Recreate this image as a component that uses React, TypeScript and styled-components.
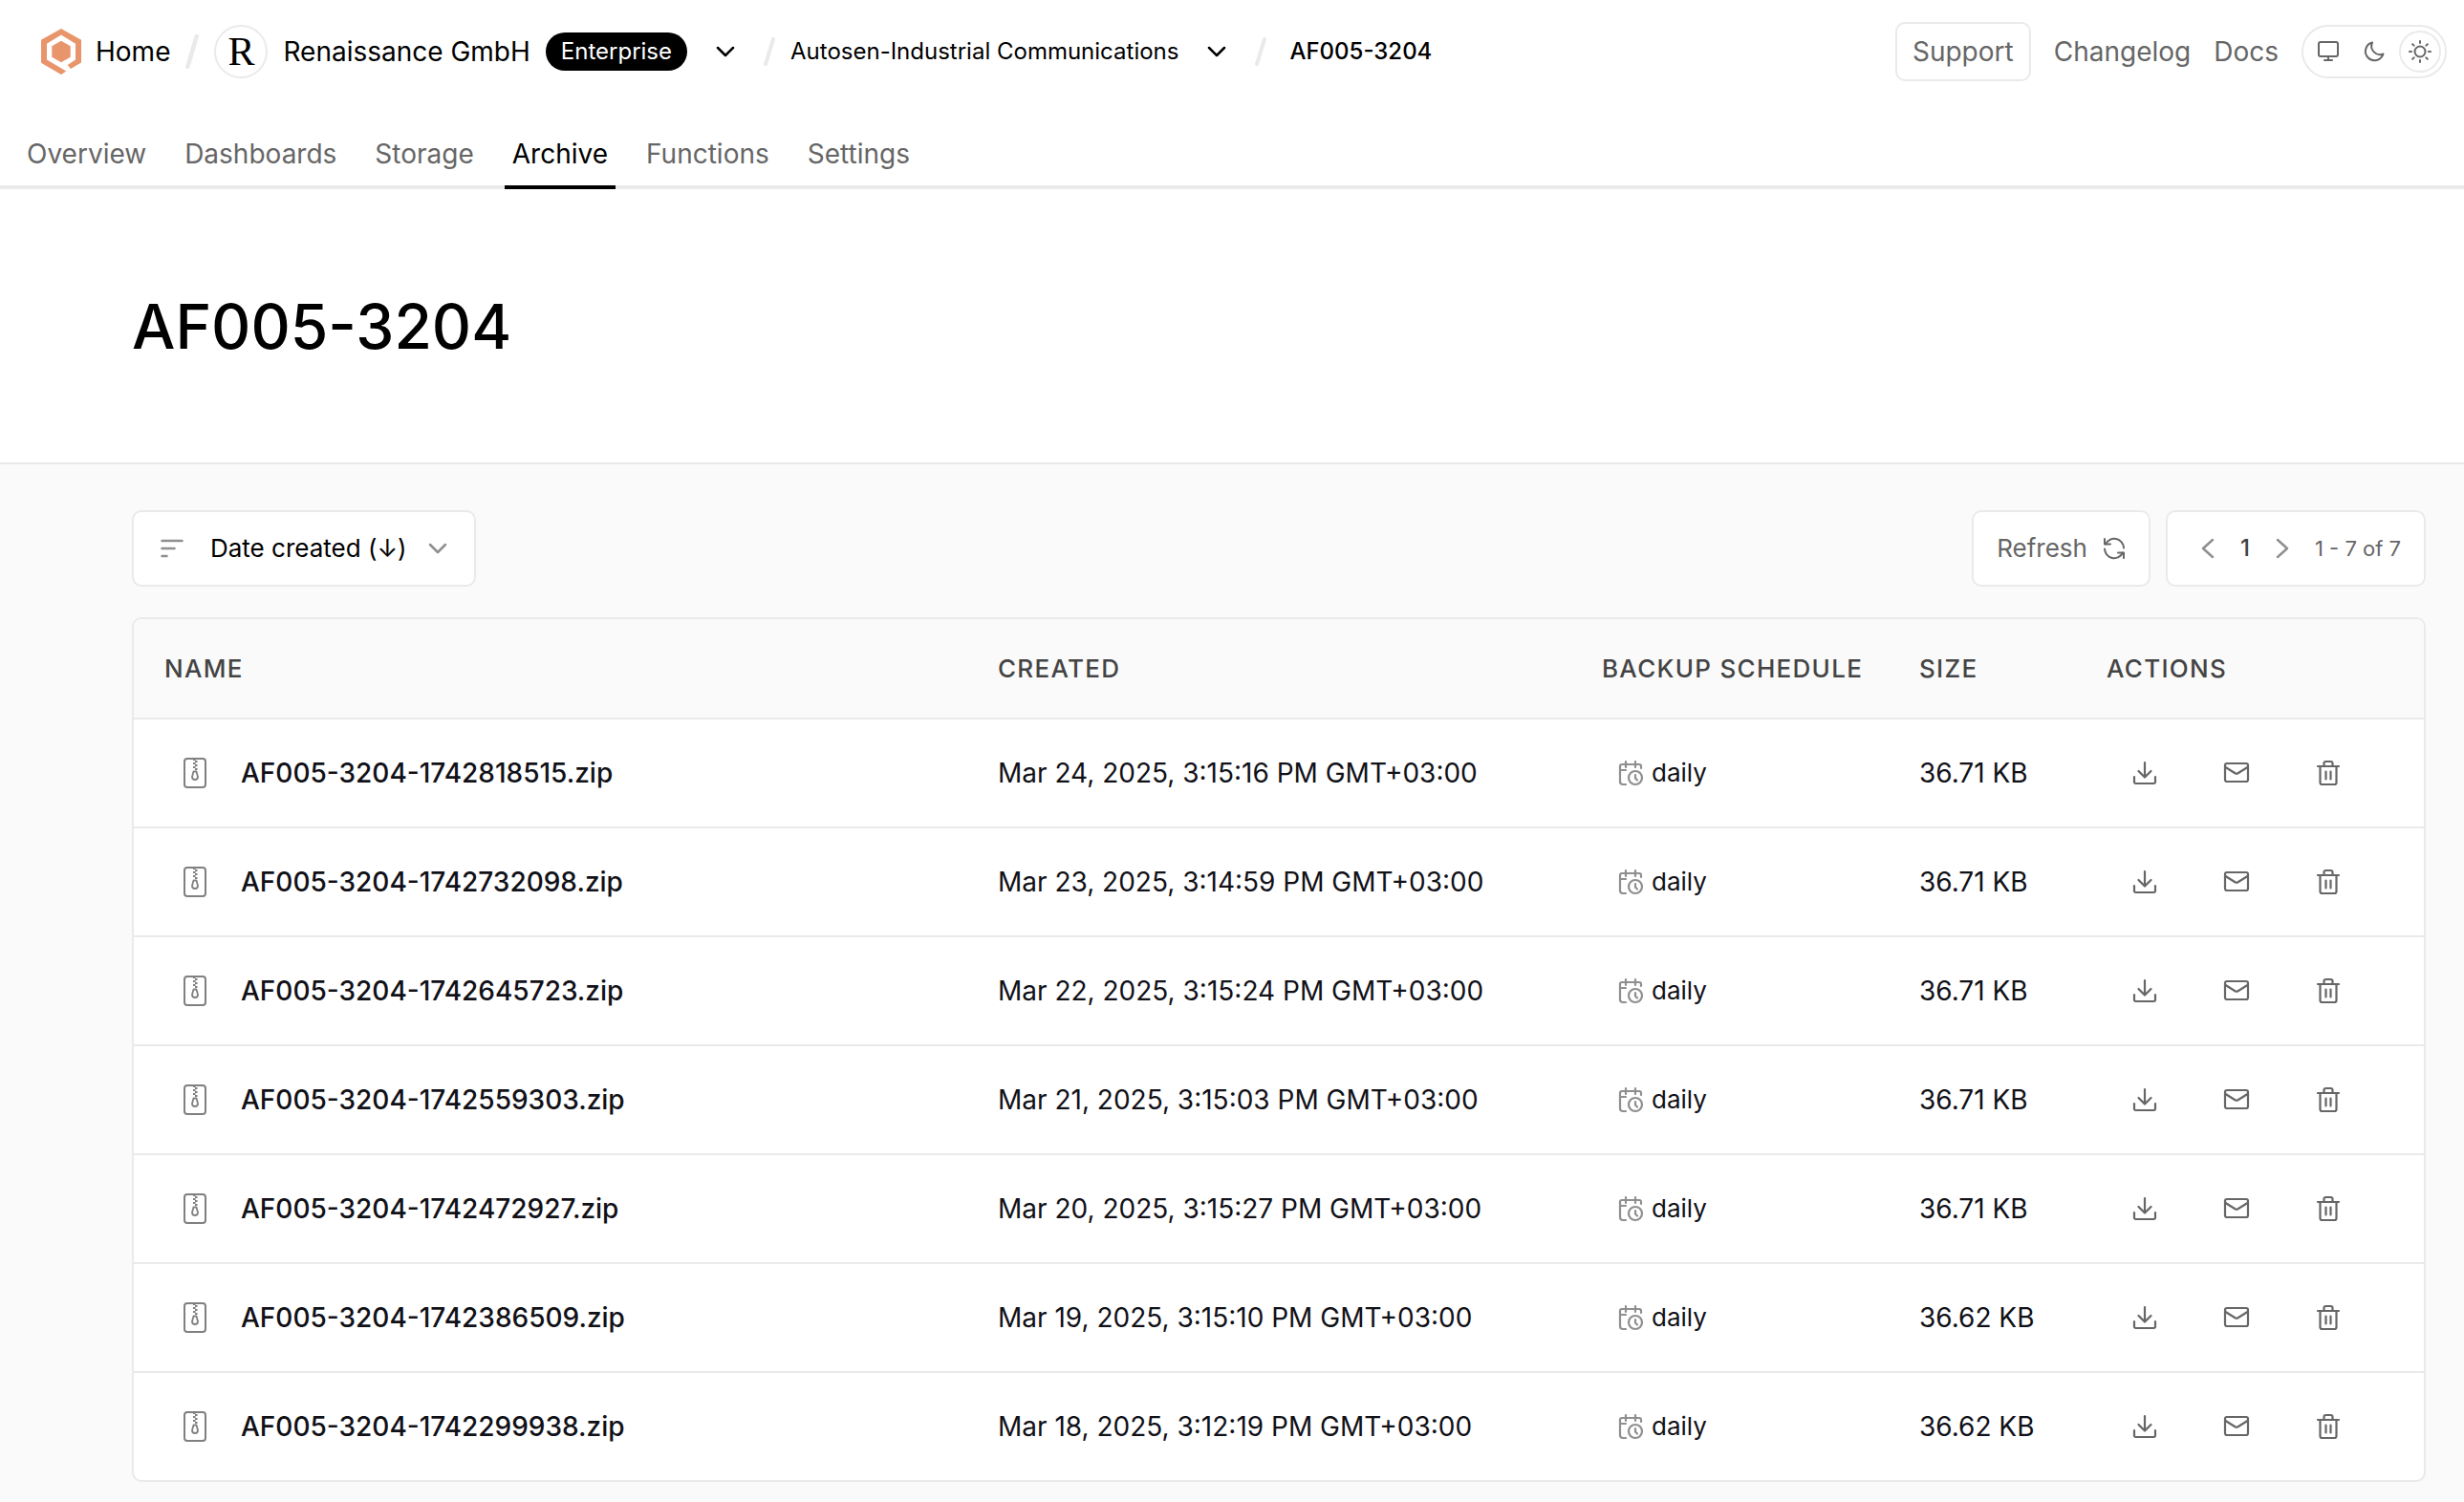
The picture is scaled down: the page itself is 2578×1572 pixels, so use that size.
import React, { useState } from 'react';
import styled, { createGlobalStyle } from 'styled-components';

const line = '#eaeaea';
const muted = '#666666';
const faint = '#8f8f8f';

const GlobalStyle = createGlobalStyle`
  *, *::before, *::after { box-sizing: border-box; }
  body {
    margin: 0;
    background: #fafafa;
    color: #000;
    font-family: Inter, "Liberation Sans", sans-serif;
    font-size: 28px;
    line-height: 40px;
  }
  a { color: inherit; text-decoration: none; }
  button { font: inherit; color: inherit; background: none; border: 0; padding: 0; cursor: pointer; }
  h1 { margin: 0; }
`;

const Header = styled.header`
  background: #fff;
  border-bottom: 4px solid ${line};
`;

const TopBar = styled.div`
  display: flex;
  align-items: center;
  justify-content: space-between;
  height: 108px;
  padding: 0 18px 0 42px;
`;

const Crumbs = styled.nav`
  display: flex;
  align-items: center;
`;

const HomeLink = styled.a`
  display: flex;
  align-items: center;
  gap: 14px;
`;

const TeamLink = styled.a`
  display: flex;
  align-items: center;
  gap: 16px;
`;

const ProjectLink = styled.a<{ $current?: boolean }>`
  margin-left: ${(p) => (p.$current ? 8 : 0)}px;
  font-size: 24px;
  font-weight: ${(p) => (p.$current ? 500 : 400)};
`;

const Slash = styled.svg<{ $large?: boolean }>`
  width: ${(p) => (p.$large ? 14 : 12)}px;
  height: ${(p) => (p.$large ? 36 : 30)}px;
  margin: ${(p) => (p.$large ? '0 16px' : '0 16px 0 0')};
  stroke: ${line};
  stroke-width: 4;
  stroke-linecap: round;
`;

const Avatar = styled.span`
  display: grid;
  place-items: center;
  width: 56px;
  height: 56px;
  border: 2px solid ${line};
  border-radius: 50%;
  font-family: "Liberation Serif", serif;
  font-size: 42px;
`;

const Badge = styled.span`
  height: 40px;
  padding: 0 16px;
  border-radius: 20px;
  background: #000;
  color: #fff;
  font-size: 24px;
`;

const Switcher = styled.button`
  display: grid;
  place-items: center;
  width: 48px;
  height: 48px;
  margin: 0 16px;
`;

const TopLinks = styled.div`
  display: flex;
  align-items: center;
  gap: 24px;
  color: ${muted};
`;

const SupportButton = styled.button`
  height: 62px;
  padding: 0 16px;
  border: 2px solid ${line};
  border-radius: 10px;
`;

const ThemeSwitch = styled.div`
  display: flex;
  align-items: center;
  gap: 4px;
  height: 56px;
  padding: 0 4px;
  border: 2px solid ${line};
  border-radius: 28px;
`;

const ThemeButton = styled.button<{ $active: boolean }>`
  display: grid;
  place-items: center;
  width: 44px;
  height: 44px;
  border: 2px solid ${(p) => (p.$active ? line : 'transparent')};
  border-radius: 50%;
`;

const Tabs = styled.nav`
  display: flex;
  gap: 24px;
  padding: 0 20px;
`;

const Tab = styled.a<{ $active?: boolean }>`
  height: 90px;
  margin-bottom: -4px;
  padding: 33px 8px 0;
  border-bottom: 4px solid ${(p) => (p.$active ? '#000' : 'transparent')};
  color: ${(p) => (p.$active ? '#000' : muted)};
`;

const Hero = styled.section`
  padding: 104px 138px 102px;
  background: #fff;
  border-bottom: 2px solid ${line};
`;

const Title = styled.h1`
  font-size: 64px;
  line-height: 80px;
  font-weight: 500;
`;

const Content = styled.main`
  padding: 48px 40px 21px 138px;
`;

const Toolbar = styled.div`
  display: flex;
  align-items: center;
  gap: 16px;
  margin-bottom: 32px;
  font-size: 26px;
`;

const SortButton = styled.button`
  display: flex;
  align-items: center;
  height: 80px;
  margin-right: auto;
  padding: 0 28px;
  border: 2px solid ${line};
  border-radius: 10px;
  background: #fff;
`;

const SortLabel = styled.span`
  margin: 0 22px 0 28px;
`;

const RefreshButton = styled.button`
  display: flex;
  align-items: center;
  gap: 16px;
  height: 80px;
  padding: 0 24px;
  border: 2px solid ${line};
  border-radius: 10px;
  background: #fff;
  color: ${muted};
`;

const Pager = styled.div`
  display: flex;
  align-items: center;
  height: 80px;
  padding: 0 24px;
  border: 2px solid ${line};
  border-radius: 10px;
  background: #fff;
`;

const PageArrow = styled.button`
  display: grid;
  place-items: center;
  width: 36px;
  height: 40px;
`;

const PageNumber = styled.span`
  width: 42px;
  color: #444;
  font-size: 24px;
  font-weight: 500;
  text-align: center;
`;

const PageRange = styled.span`
  margin-left: 16px;
  color: ${muted};
  font-size: 22px;
`;

const TableFrame = styled.div`
  overflow: hidden;
  border: 2px solid ${line};
  border-radius: 10px;
  background: #fff;
`;

const Table = styled.table`
  width: 100%;
  border-collapse: separate;
  border-spacing: 0;
  table-layout: fixed;
`;

const Column = styled.col<{ $share: number }>`
  width: ${(p) => p.$share}%;
`;

const HeadCell = styled.th`
  height: 105px;
  padding: 0 32px;
  background: #fafafa;
  border-bottom: 2px solid ${line};
  color: #444;
  font-size: 26px;
  font-weight: 500;
  letter-spacing: 0.05em;
  text-align: left;
  white-space: nowrap;
`;

const Row = styled.tr`
  &:not(:last-child) td { border-bottom: 2px solid ${line}; }
  &:last-child td { height: 112px; }
`;

const Cell = styled.td`
  height: 114px;
  padding: 0 32px;
  color: #111118;
  white-space: nowrap;
`;

const FileName = styled.a`
  display: flex;
  align-items: center;
  gap: 34px;
  padding-left: 18px;
  font-weight: 500;
`;

const Schedule = styled.span`
  display: flex;
  align-items: center;
  gap: 8px;
  padding-left: 16px;
  font-size: 26px;
`;

const Actions = styled.div`
  display: flex;
  margin-left: -8px;
  color: ${muted};
`;

const ActionButton = styled.button`
  display: grid;
  place-items: center;
  width: 96px;
  height: 56px;
`;

const Glyph = styled.svg<{ $color?: string }>`
  display: block;
  flex: none;
  color: ${(p) => p.$color ?? 'inherit'};
  fill: none;
  stroke: currentColor;
  stroke-linecap: round;
  stroke-linejoin: round;
`;

const LogoMark = styled.svg`
  display: block;
  fill: #e9956b;
`;

const Logo = () => (
  <LogoMark width="44" height="48" viewBox="0 0 44 48" aria-hidden="true">
    <path d="M22 0 L43 11.700 V35.500 L32 42 L28.700 38 L37 32.500 V15.700 L22 6.500 L7 15.700 V32.500 L27.300 44.500 L22 48 L1 35.700 V11.700 Z" />
    <path d="M22 12.700 L31.700 18.300 V29.700 L22 35.300 L12.300 29.700 V18.300 Z" />
  </LogoMark>
);

const ChevronDown = ({ color = '#000', weight = 2.5 }: { color?: string; weight?: number }) => (
  <Glyph $color={color} width="20" height="12" viewBox="0 0 20 12" strokeWidth={weight} aria-hidden="true">
    <path d="M2 2 L10 10 L18 2" />
  </Glyph>
);

const Separator = ({ large }: { large?: boolean }) => (
  <Slash $large={large} viewBox="0 0 12 32" preserveAspectRatio="none" aria-hidden="true">
    <path d="M10 2 L2 30" />
  </Slash>
);

const MonitorIcon = () => (
  <Glyph width="24" height="26" viewBox="0 0 24 26" strokeWidth="2" aria-hidden="true">
    <rect x="2" y="3" width="20" height="15" rx="2" />
    <path d="M12 18 V22 M8 22 H16" />
  </Glyph>
);

const MoonIcon = () => (
  <Glyph width="24" height="24" viewBox="0 0 24 24" strokeWidth="2" aria-hidden="true">
    <path d="M10 2.500 A9.500 9.500 0 1 0 21.500 14.500 A9 9 0 0 1 10 2.500 Z" />
  </Glyph>
);

const SunIcon = () => (
  <Glyph width="26" height="26" viewBox="0 0 26 26" strokeWidth="2" aria-hidden="true">
    <circle cx="13" cy="13" r="5.500" />
    <path d="M13 2 V4 M13 22 V24 M2 13 H4 M22 13 H24 M5.200 5.200 L6.600 6.600 M19.400 19.400 L20.800 20.800 M5.200 20.800 L6.600 19.400 M19.400 6.600 L20.800 5.200" />
  </Glyph>
);

const SortIcon = () => (
  <Glyph $color={faint} width="24" height="20" viewBox="0 0 24 20" strokeWidth="2.500" aria-hidden="true">
    <path d="M1.500 2 H22.500 M1.500 10 H14.500 M1.500 18 H6.500" />
  </Glyph>
);

const RefreshIcon = () => (
  <Glyph width="24" height="24" viewBox="0 0 24 24" strokeWidth="2" aria-hidden="true">
    <path d="M2 2 V7.500 H8 M22 22 V16.500 H16" />
    <path d="M3 7.500 A10 10 0 0 1 22 11.500 M21 16.500 A10 10 0 0 1 2 12.500" />
  </Glyph>
);

const ArrowIcon = ({ next }: { next?: boolean }) => (
  <Glyph $color={faint} width="14" height="22" viewBox="0 0 14 22" strokeWidth="2.500" aria-hidden="true">
    <path d={next ? 'M2 2 L12 11 L2 20' : 'M12 2 L2 11 L12 20'} />
  </Glyph>
);

const ZipIcon = () => (
  <Glyph $color="#808080" width="28" height="34" viewBox="0 0 28 34" strokeWidth="2" aria-hidden="true">
    <rect x="3" y="2" width="22" height="30" rx="3" />
    <path d="M14.500 3 H12 M14 5 H16.500 M14.500 7 H12 M14 9 H16.500 M14.500 11 H12 M14 13 H16.500" strokeLinecap="butt" />
    <path d="M12.500 15.500 H15.500 L17 21 A3 3 0 1 1 11 21 Z" strokeWidth="1.800" />
  </Glyph>
);

const CalendarIcon = () => (
  <Glyph $color={faint} width="28" height="28" viewBox="0 0 28 28" strokeWidth="2.200" aria-hidden="true">
    <path d="M25 9 V7 A2 2 0 0 0 23 5 H5 A2 2 0 0 0 3 7 V23 A3 3 0 0 0 5.500 26 H9 M3 11 H9 M9 2 V8 M19 2 V8" />
    <circle cx="19" cy="19" r="7" />
    <path d="M19 16 V19.500 L21 21.500" />
  </Glyph>
);

const DownloadIcon = () => (
  <Glyph width="28" height="28" viewBox="0 0 28 28" strokeWidth="2.200" aria-hidden="true">
    <path d="M14 3 V18 M7.500 12 L14 18.500 L20.500 12 M3 18 V23.500 A1.500 1.500 0 0 0 4.500 25 H23.500 A1.500 1.500 0 0 0 25 23.500 V18" />
  </Glyph>
);

const MailIcon = () => (
  <Glyph width="28" height="28" viewBox="0 0 28 28" strokeWidth="2.200" aria-hidden="true">
    <rect x="2" y="4" width="24" height="19" rx="2" />
    <path d="M2.500 8 L12.500 14.300 Q14 15.200 15.500 14.300 L25.500 8" />
  </Glyph>
);

const TrashIcon = () => (
  <Glyph width="28" height="28" viewBox="0 0 28 28" strokeWidth="2.200" aria-hidden="true">
    <path d="M3 7 H25 M9.500 7 V4 A2 2 0 0 1 11.500 2 H16.500 A2 2 0 0 1 18.500 4 V7 M5.500 7 V24 A2 2 0 0 0 7.500 26 H20.500 A2 2 0 0 0 22.500 24 V7 M11.500 12.500 V20.500 M16.500 12.500 V20.500" />
  </Glyph>
);

const themes = [
  { name: 'System theme', Icon: MonitorIcon },
  { name: 'Dark theme', Icon: MoonIcon },
  { name: 'Light theme', Icon: SunIcon },
];

const tabs = ['Overview', 'Dashboards', 'Storage', 'Archive', 'Functions', 'Settings'];

const columns = [
  { label: 'NAME', width: 872 },
  { label: 'CREATED', width: 632 },
  { label: 'BACKUP SCHEDULE', width: 332 },
  { label: 'SIZE', width: 196 },
  { label: 'ACTIONS', width: 364 },
];
const columnTotal = columns.reduce((sum, c) => sum + c.width, 0);

const files = [
  { id: '1742818515', created: 'Mar 24, 2025, 3:15:16 PM GMT+03:00', size: '36.71 KB' },
  { id: '1742732098', created: 'Mar 23, 2025, 3:14:59 PM GMT+03:00', size: '36.71 KB' },
  { id: '1742645723', created: 'Mar 22, 2025, 3:15:24 PM GMT+03:00', size: '36.71 KB' },
  { id: '1742559303', created: 'Mar 21, 2025, 3:15:03 PM GMT+03:00', size: '36.71 KB' },
  { id: '1742472927', created: 'Mar 20, 2025, 3:15:27 PM GMT+03:00', size: '36.71 KB' },
  { id: '1742386509', created: 'Mar 19, 2025, 3:15:10 PM GMT+03:00', size: '36.62 KB' },
  { id: '1742299938', created: 'Mar 18, 2025, 3:12:19 PM GMT+03:00', size: '36.62 KB' },
];

export default function App() {
  const [theme, setTheme] = useState('Light theme');
  return (
    <>
      <GlobalStyle />
      <Header>
        <TopBar>
          <Crumbs aria-label="Breadcrumb">
            <HomeLink href="#home"><Logo />Home</HomeLink>
            <Separator large />
            <TeamLink href="#team">
              <Avatar>R</Avatar>
              Renaissance GmbH
              <Badge>Enterprise</Badge>
            </TeamLink>
            <Switcher aria-label="Switch team"><ChevronDown /></Switcher>
            <Separator />
            <ProjectLink href="#project">Autosen-Industrial Communications</ProjectLink>
            <Switcher aria-label="Switch project"><ChevronDown /></Switcher>
            <Separator />
            <ProjectLink href="#device" $current>AF005-3204</ProjectLink>
          </Crumbs>
          <TopLinks>
            <SupportButton>Support</SupportButton>
            <a href="#changelog">Changelog</a>
            <a href="#docs">Docs</a>
            <ThemeSwitch>
              {themes.map(({ name, Icon }) => (
                <ThemeButton key={name} aria-label={name} $active={theme === name} onClick={() => setTheme(name)}>
                  <Icon />
                </ThemeButton>
              ))}
            </ThemeSwitch>
          </TopLinks>
        </TopBar>
        <Tabs aria-label="Sections">
          {tabs.map((tab) => (
            <Tab key={tab} href={`#${tab.toLowerCase()}`} $active={tab === 'Archive'}>{tab}</Tab>
          ))}
        </Tabs>
      </Header>
      <Hero>
        <Title>AF005-3204</Title>
      </Hero>
      <Content>
        <Toolbar>
          <SortButton>
            <SortIcon />
            <SortLabel>Date created (↓)</SortLabel>
            <ChevronDown color={faint} />
          </SortButton>
          <RefreshButton>Refresh<RefreshIcon /></RefreshButton>
          <Pager>
            <PageArrow aria-label="Previous page"><ArrowIcon /></PageArrow>
            <PageNumber>1</PageNumber>
            <PageArrow aria-label="Next page"><ArrowIcon next /></PageArrow>
            <PageRange>1 - 7 of 7</PageRange>
          </Pager>
        </Toolbar>
        <TableFrame>
          <Table>
            <colgroup>
              {columns.map((c) => <Column key={c.label} $share={(c.width / columnTotal) * 100} />)}
            </colgroup>
            <thead>
              <tr>{columns.map((c) => <HeadCell key={c.label} scope="col">{c.label}</HeadCell>)}</tr>
            </thead>
            <tbody>
              {files.map((file) => (
                <Row key={file.id}>
                  <Cell><FileName href={`#${file.id}`}><ZipIcon />AF005-3204-{file.id}.zip</FileName></Cell>
                  <Cell>{file.created}</Cell>
                  <Cell><Schedule><CalendarIcon />daily</Schedule></Cell>
                  <Cell>{file.size}</Cell>
                  <Cell>
                    <Actions>
                      <ActionButton aria-label="Download"><DownloadIcon /></ActionButton>
                      <ActionButton aria-label="Send by email"><MailIcon /></ActionButton>
                      <ActionButton aria-label="Delete"><TrashIcon /></ActionButton>
                    </Actions>
                  </Cell>
                </Row>
              ))}
            </tbody>
          </Table>
        </TableFrame>
      </Content>
    </>
  );
}
